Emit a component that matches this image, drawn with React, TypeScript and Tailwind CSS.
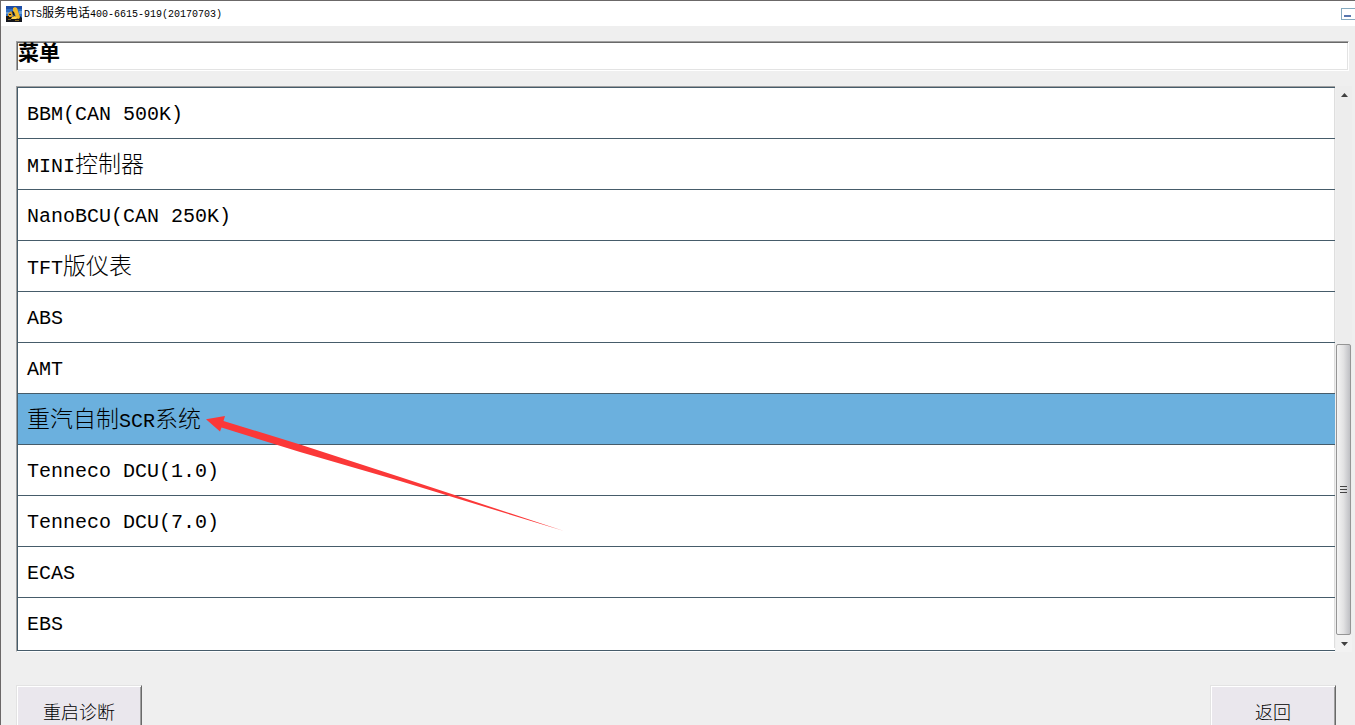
import React, { useState } from 'react'

const menuItems = [
  'BBM(CAN 500K)',
  'MINI控制器',
  'NanoBCU(CAN 250K)',
  'TFT版仪表',
  'ABS',
  'AMT',
  '重汽自制SCR系统',
  'Tenneco DCU(1.0)',
  'Tenneco DCU(7.0)',
  'ECAS',
  'EBS',
]

interface MixedTextProps {
  text: string
  hanClass: string
}

// Chinese runs are set slightly larger than the monospaced latin ones
const MixedText: React.FC<MixedTextProps> = ({ text, hanClass }) => {
  const runs = text.split(/([\u4e00-\u9fff]+)/).filter(Boolean)
  return (
    <span className="whitespace-pre">
      {runs.map((run, i) =>
        /[\u4e00-\u9fff]/.test(run) ? (
          <span key={i} className={hanClass}>{run}</span>
        ) : (
          run
        )
      )}
    </span>
  )
}

const AppIcon = () => (
  <svg width="16" height="16" viewBox="0 0 16 16" aria-hidden="true">
    <rect width="16" height="16" fill="#2f6fc4" />
    <path d="M0 0h16v3H0z" fill="#1d4da6" />
    <path d="M0 6h4v2H0zM13 5h3v3h-3z" fill="#6a9fd8" />
    <path d="M0 11l3-1 3 1 5-2 3 1 2 2v4H0z" fill="#14161d" />
    <path d="M7 2l2-1 2 1 1 3 1 3 1 3-1 2-3-1-1-4-2-3z" fill="#f0b92a" />
    <path d="M2 8l3-3 1 2 1 3-2 1-3 0z" fill="#e3a01c" />
    <path d="M6 11l3-1 3 2-2 1H5z" fill="#ffd24a" />
    <path d="M6 5l2 1 1 4-2-1zM3 8h2v1H3zM0 10h3v2H0z" fill="#1d1508" />
    <path d="M2 13h3v1H2zM9 14h4v1H9z" fill="#86671f" />
  </svg>
)

const TitleBar = () => (
  <header className="flex h-[25px] shrink-0 items-center bg-white pt-[1px] pl-[5px]">
    <AppIcon />
    <div className="ml-[2px] text-[10px] leading-[18px]">
      <MixedText text="DTS服务电话400-6615-919(20170703)" hanClass="text-[12px]" />
    </div>
    <button
      type="button"
      aria-label="最小化"
      className="-mr-[7px] ml-auto flex h-[12px] w-[21px] shrink-0 items-end border border-[#86aabf] bg-white pb-[2px] pl-[2px]"
    >
      <span className="h-[2px] w-[7px] bg-[#5876ae]" />
    </button>
  </header>
)

const ScrollBar = () => (
  <div className="flex w-4 flex-col bg-[#ededed]">
    <button type="button" aria-label="向上滚动" className="flex h-[17px] justify-center pt-[7px]">
      <svg width="7" height="4" viewBox="0 0 7 4"><path d="M3.5 0L7 4H0z" fill="#404040" /></svg>
    </button>
    <div className="flex flex-1 flex-col justify-end">
      <div className="mr-[1px] flex h-[291px] flex-col items-center justify-center gap-[2px] rounded-[2px] border border-[#959595] bg-linear-to-r from-[#f5f5f5] via-[#e2e2e3] to-[#bfc0c4]">
        <span className="h-[1px] w-[7px] bg-[#444]" />
        <span className="h-[1px] w-[7px] bg-[#444]" />
        <span className="h-[1px] w-[7px] bg-[#444]" />
      </div>
    </div>
    <button type="button" aria-label="向下滚动" className="flex h-[17px] justify-center bg-[#f2f2f2] pt-[7px]">
      <svg width="7" height="4" viewBox="0 0 7 4"><path d="M0 0h7L3.5 4z" fill="#404040" /></svg>
    </button>
  </div>
)

interface MenuRowProps {
  label: string
  selected: boolean
  onSelect: () => void
}

const MenuRow: React.FC<MenuRowProps> = ({ label, selected, onSelect }) => (
  <li className="border-b border-[#465c6a] last:pb-[2px]">
    <button
      type="button"
      onClick={onSelect}
      className={
        selected
          ? 'flex h-[50px] w-full items-center bg-[#6bb0de] pt-1 pl-[9px] text-left'
          : 'flex h-[50px] w-full items-center border-r border-[#dedede] bg-white pt-1 pl-[9px] text-left'
      }
    >
      <MixedText text={label} hanClass="text-[23px]" />
    </button>
  </li>
)

const PointerArrow = () => (
  <svg
    className="pointer-events-none absolute top-[326px] left-[189px]"
    width="364"
    height="122"
    viewBox="206 413 364 122"
    aria-hidden="true"
  >
    <path d="M206 419.3L225 416L223.5 421L300 444.5L400 477L564 531L400 481L300 452L221.5 427.5L220 431.5Z" fill="#fb3838" />
  </svg>
)

interface FooterButtonProps {
  children: React.ReactNode
}

const FooterButton: React.FC<FooterButtonProps> = ({ children }) => (
  <button
    type="button"
    className="h-[56px] w-[126px] border border-t-[#e3e3e3] border-r-[#696969] border-b-[#696969] border-l-[#e3e3e3] bg-[#eae7ed] pt-[1px] text-[18px] leading-6 font-light shadow-[inset_1px_1px_#fff,inset_-1px_-1px_#a0a0a0]"
  >
    {children}
  </button>
)

export default function App() {
  const [selected, setSelected] = useState(6)

  return (
    <div className="flex h-screen flex-col overflow-hidden border-t border-l border-[#6b6868] bg-[#efefef] font-['Liberation_Mono','Noto_Sans_CJK_SC',monospace] text-black">
      <TitleBar />
      <main className="flex flex-col pt-[15px] pl-[15px]">
        <h1 className="mr-[6px] h-[30px] border border-t-[#a0a0a0] border-r-white border-b-white border-l-[#a0a0a0] bg-white pl-[1px] text-[21px] leading-[26px] font-bold shadow-[inset_1px_1px_#696969,inset_-1px_-1px_#e3e3e3]">
          菜单
        </h1>
        <div className="mt-[15px] mr-[3px] flex">
          <div className="relative mr-[1px] flex-1 border-t border-b border-l border-t-[#a0a0a0] border-b-white border-l-[#a0a0a0] bg-white">
            <ul className="border-t border-l border-[#465c6a] text-[20px] leading-[30px] font-light">
              {menuItems.map((label, i) => (
                <MenuRow key={label} label={label} selected={i === selected} onSelect={() => setSelected(i)} />
              ))}
            </ul>
            <PointerArrow />
          </div>
          <ScrollBar />
        </div>
        <div className="mt-[33px] mr-[19px] flex justify-between">
          <FooterButton>重启诊断</FooterButton>
          <FooterButton>返回</FooterButton>
        </div>
      </main>
    </div>
  )
}
